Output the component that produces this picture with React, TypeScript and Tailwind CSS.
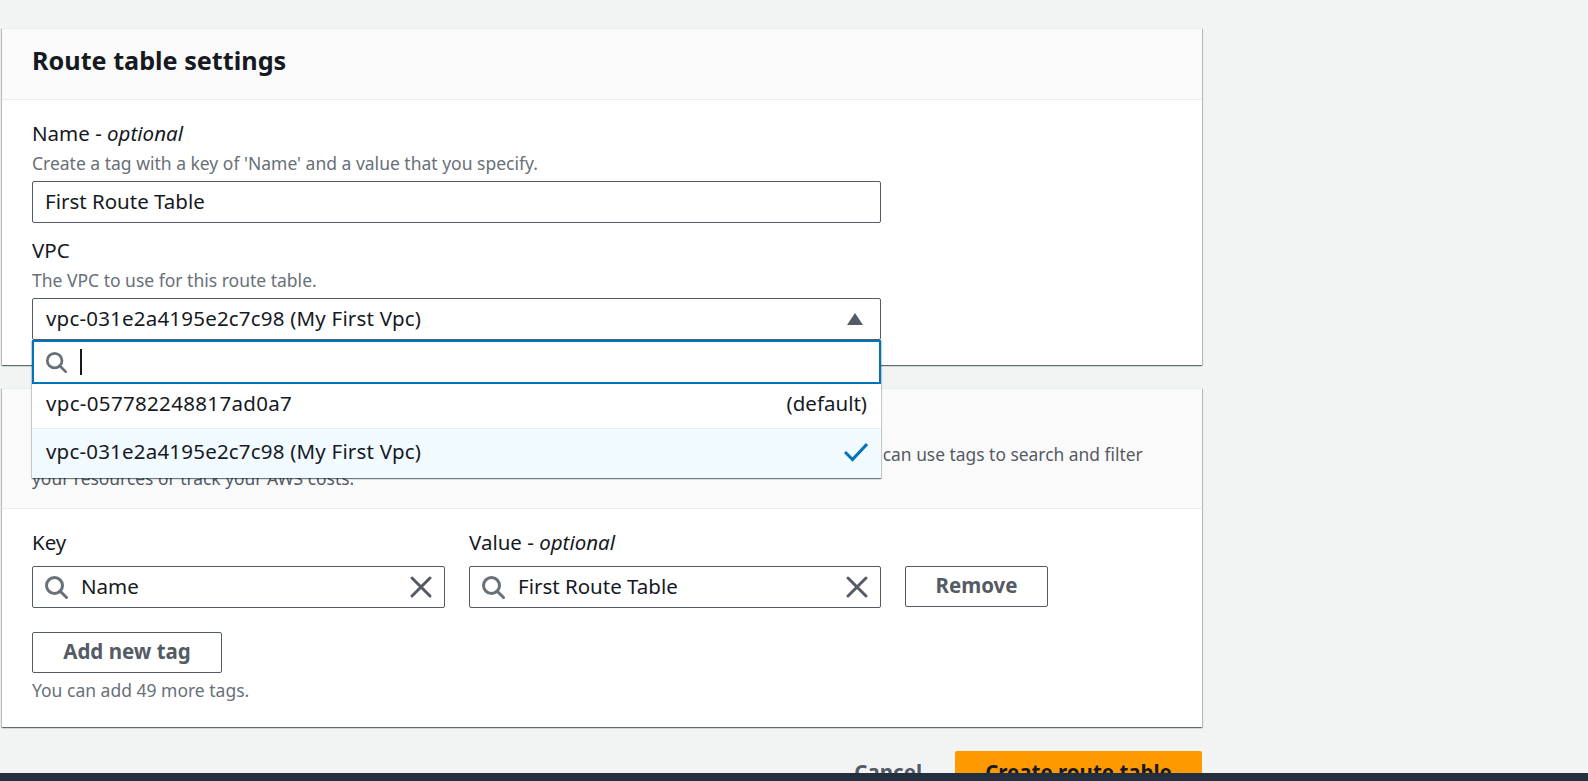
import type { ReactNode } from "react";

function SearchIcon({ className = "h-6 w-6" }: { className?: string }) {
  return (
    <svg viewBox="0 0 24 24" className={`shrink-0 ${className}`} fill="none" stroke="#687078" strokeWidth="3">
      <circle cx="10.5" cy="10.5" r="8" />
      <path d="M16 16l6.5 6.5" strokeLinecap="round" />
    </svg>
  );
}

function ClearIcon() {
  return (
    <svg viewBox="0 0 24 24" className="h-6 w-6 shrink-0" fill="none" stroke="#545b64" strokeWidth="3">
      <path d="M3 3l18 18M21 3L3 21" strokeLinecap="round" />
    </svg>
  );
}

function Label({ children }: { children: ReactNode }) {
  return <div className="text-[20.5px] leading-[28px] text-[#16191f]">{children}</div>;
}

function Hint({ children, className = "" }: { children: ReactNode; className?: string }) {
  return <div className={`text-[17.5px] leading-[24px] text-[#687078] ${className}`}>{children}</div>;
}

function TokenInput({ value, className }: { value: string; className: string }) {
  return (
    <div className={`flex h-[42px] items-center gap-[13px] rounded-[2px] border border-[#545b64] bg-white pl-[11px] pr-[11px] ${className}`}>
      <SearchIcon />
      <span className="flex-1 pb-[2px] text-[20.5px] text-[#16191f]">{value}</span>
      <ClearIcon />
    </div>
  );
}

function VpcDropdown() {
  return (
    <div className="absolute left-[-1px] right-[-1px] top-[41px] z-10 bg-white shadow-[0_1px_1px_0_rgba(0,28,36,.4),1px_1px_1px_0_rgba(0,28,36,.15),-1px_1px_1px_0_rgba(0,28,36,.15)]">
      <div className="flex h-[44px] items-center gap-[13px] border-2 border-[#0073bb] pl-[11px]">
        <SearchIcon className="h-[22px] w-[22px]" />
        <span className="h-[26px] w-[2px] bg-[#16191f]" />
      </div>
      <div className="flex h-[44px] items-center justify-between px-[14px] pb-[5px] text-[20.5px] text-[#16191f]">
        <span className="tracking-[0.33px]">vpc-057782248817ad0a7</span>
        <span>(default)</span>
      </div>
      <div className="flex h-[50px] items-center justify-between border-t border-[#eaeded] bg-[#f1faff] px-[14px] pb-[5px] text-[20.5px] text-[#16191f]">
        <span className="tracking-[0.2px]">vpc-031e2a4195e2c7c98 (My First Vpc)</span>
        <svg viewBox="0 0 24 24" className="mr-[-1px] h-6 w-6" fill="none" stroke="#0073bb" strokeWidth="3">
          <path d="M1 13l7.5 7.5L23 5" />
        </svg>
      </div>
    </div>
  );
}

function Card({ children, className = "" }: { children: ReactNode; className?: string }) {
  return (
    <section className={`border-t border-[#eaeded] bg-white shadow-[0_1px_1px_0_rgba(0,28,36,.4),1px_1px_1px_0_rgba(0,28,36,.2),-1px_1px_1px_0_rgba(0,28,36,.2)] ${className}`}>
      {children}
    </section>
  );
}

export default function App() {
  return (
    <div className="relative h-[781px] overflow-hidden bg-[#f2f3f3] font-['Noto_Sans',sans-serif]">
      <div className="ml-[2px] w-[1200px] pt-[28px]">
        <Card className="h-[337px]">
          <div className="flex h-[71px] items-center border-b border-[#eaeded] bg-[#fafafa] px-[30px] pb-[7px]">
            <h2 className="text-[25.2px] font-bold text-[#16191f]">Route table settings</h2>
          </div>
          <div className="px-[30px] pt-[19px]">
            <Label>
              Name - <i>optional</i>
            </Label>
            <Hint className="mt-[4px]">Create a tag with a key of 'Name' and a value that you specify.</Hint>
            <div className="mt-[6px] flex h-[42px] w-[849px] items-center rounded-[2px] border border-[#545b64] px-[12px] pb-[2px] text-[20.5px] text-[#16191f]">
              First Route Table
            </div>
            <div className="mt-[13px]">
              <Label>VPC</Label>
              <Hint className="mt-[4px]">The VPC to use for this route table.</Hint>
            </div>
            <div className="relative mt-[6px] flex h-[42px] w-[849px] items-center justify-between rounded-[2px] border border-[#545b64] pl-[13px] pr-[17px] text-[20.5px] text-[#16191f]">
              <span className="pb-[2px] tracking-[0.2px]">vpc-031e2a4195e2c7c98 (My First Vpc)</span>
              <svg viewBox="0 0 16 12" className="h-3 w-4" fill="#545b64">
                <path d="M8 0l8 12H0z" />
              </svg>
              <VpcDropdown />
            </div>
          </div>
        </Card>

        <Card className="mt-[23px] h-[339px]">
          <div className="h-[120px] border-b border-[#eaeded] bg-[#fafafa] px-[30px] pt-[9px]">
            <h2 className="text-[25.2px] font-bold text-[#16191f]">Tags</h2>
            <p className="mt-[6px] text-[17.4px] leading-[24px] text-[#545b64]">
              A tag is a label that you assign to an AWS resource. Each tag consists of a key and an optional value. You can use tags to search and filter
              <br />
              your resources or track your AWS costs.
            </p>
          </div>
          <div className="px-[30px] pt-[19px]">
            <div className="flex gap-[24px]">
              <div className="w-[413px]">
                <Label>Key</Label>
                <TokenInput value="Name" className="mt-[10px]" />
              </div>
              <div className="w-[412px]">
                <Label>
                  Value - <i>optional</i>
                </Label>
                <TokenInput value="First Route Table" className="mt-[10px]" />
              </div>
              <button className="mt-[38px] h-[41px] w-[143px] rounded-[2px] border border-[#545b64] pb-[2px] text-[20.5px] font-bold text-[#545b64]">
                Remove
              </button>
            </div>
            <button className="mt-[24px] h-[41px] w-[190px] rounded-[2px] border border-[#545b64] pb-[2px] text-[20.5px] font-bold text-[#545b64]">
              Add new tag
            </button>
            <Hint className="mt-[5px]">You can add 49 more tags.</Hint>
          </div>
        </Card>

        <div className="mt-[24px] flex items-center justify-end gap-[33px]">
          <button className="text-[20.5px] font-bold text-[#545b64]">Cancel</button>
          <button className="h-[42px] w-[247px] rounded-[2px] bg-[#ff9900] text-[20.5px] font-bold text-[#16191f]">
            Create route table
          </button>
        </div>
      </div>
      <div className="absolute bottom-0 left-0 right-0 h-[8px] bg-[#232f3e]" />
    </div>
  );
}
